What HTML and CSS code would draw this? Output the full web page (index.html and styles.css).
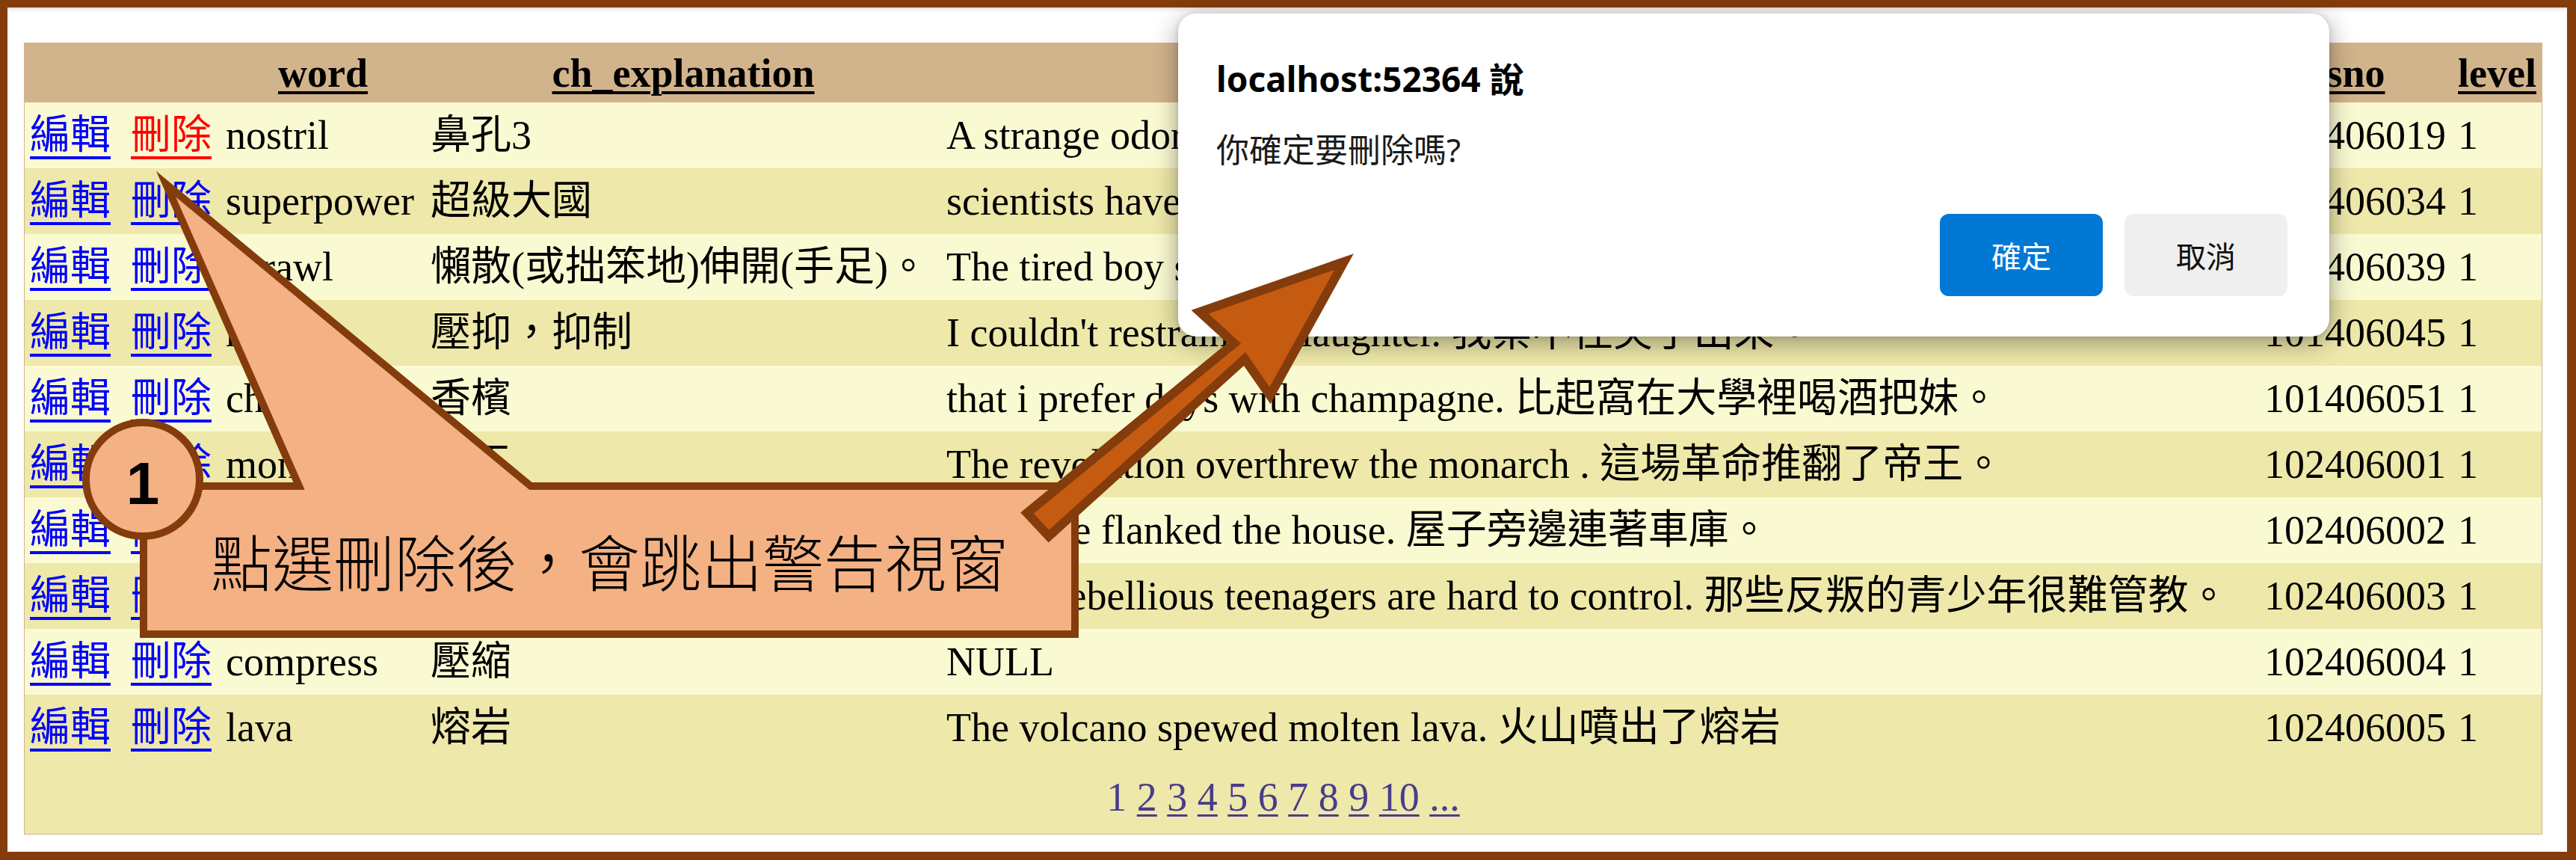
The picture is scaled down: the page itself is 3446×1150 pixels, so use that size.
FILE: index.html
```html
<!DOCTYPE html>
<html lang="zh-Hant">
<head>
<meta charset="utf-8">
<title>GridView 刪除確認</title>
<link rel="stylesheet" href="styles.css">
</head>
<body>
<div class="stage">
  <div class="frame">
    <table class="grid">
      <colgroup>
        <col class="c-cmd"><col class="c-word"><col class="c-ch"><col class="c-en"><col class="c-sno"><col class="c-lv">
      </colgroup>
      <thead>
        <tr>
          <th></th>
          <th><a class="sort" href="#">word</a></th>
          <th><a class="sort" href="#">ch_explanation</a></th>
          <th><a class="sort" href="#">en_explanation</a></th>
          <th><a class="sort" href="#">sno</a></th>
          <th><a class="sort" href="#">level</a></th>
        </tr>
      </thead>
      <tbody>
        <tr>
          <td><a class="lnk" href="#">編輯</a><a class="lnk del hot" href="#">刪除</a></td>
          <td>nostril</td><td>鼻孔3</td><td>A strange odor filled my nostrils. 一股怪味充滿了我的鼻孔。</td><td>101406019</td><td>1</td>
        </tr>
        <tr class="alt">
          <td><a class="lnk" href="#">編輯</a><a class="lnk del" href="#">刪除</a></td>
          <td>superpower</td><td>超級大國</td><td>scientists have said that it is a superpower. 科學家說它是超級大國。</td><td>101406034</td><td>1</td>
        </tr>
        <tr>
          <td><a class="lnk" href="#">編輯</a><a class="lnk del" href="#">刪除</a></td>
          <td>sprawl</td><td>懶散(或拙笨地)伸開(手足)。</td><td>The tired boy sprawled on the sofa. 疲倦的男孩懶散地躺在沙發上。</td><td>101406039</td><td>1</td>
        </tr>
        <tr class="alt">
          <td><a class="lnk" href="#">編輯</a><a class="lnk del" href="#">刪除</a></td>
          <td>restrain</td><td>壓抑，抑制</td><td>I couldn't restrain my laughter. 我禁不住笑了出來。</td><td>101406045</td><td>1</td>
        </tr>
        <tr>
          <td><a class="lnk" href="#">編輯</a><a class="lnk del" href="#">刪除</a></td>
          <td>champagne</td><td>香檳</td><td>that i prefer days with champagne. 比起窩在大學裡喝酒把妹。</td><td>101406051</td><td>1</td>
        </tr>
        <tr class="alt">
          <td><a class="lnk" href="#">編輯</a><a class="lnk del" href="#">刪除</a></td>
          <td>monarch</td><td>帝王</td><td>The revolution overthrew the monarch . 這場革命推翻了帝王。</td><td>102406001</td><td>1</td>
        </tr>
        <tr>
          <td><a class="lnk" href="#">編輯</a><a class="lnk del" href="#">刪除</a></td>
          <td>garage</td><td>車庫</td><td>A garage flanked the house. 屋子旁邊連著車庫。</td><td>102406002</td><td>1</td>
        </tr>
        <tr class="alt">
          <td><a class="lnk" href="#">編輯</a><a class="lnk del" href="#">刪除</a></td>
          <td>rebellious</td><td>反叛的</td><td>Those rebellious teenagers are hard to control. 那些反叛的青少年很難管教。</td><td>102406003</td><td>1</td>
        </tr>
        <tr>
          <td><a class="lnk" href="#">編輯</a><a class="lnk del" href="#">刪除</a></td>
          <td>compress</td><td>壓縮</td><td>NULL</td><td>102406004</td><td>1</td>
        </tr>
        <tr class="alt">
          <td><a class="lnk" href="#">編輯</a><a class="lnk del" href="#">刪除</a></td>
          <td>lava</td><td>熔岩</td><td>The volcano spewed molten lava. 火山噴出了熔岩</td><td>102406005</td><td>1</td>
        </tr>
        <tr class="pager">
          <td colspan="6"><span>1</span> <a href="#">2</a> <a href="#">3</a> <a href="#">4</a> <a href="#">5</a> <a href="#">6</a> <a href="#">7</a> <a href="#">8</a> <a href="#">9</a> <a href="#">10</a> <a href="#">...</a></td>
        </tr>
      </tbody>
    </table>
  </div>

  <div class="dialog">
    <div class="dlg-title">localhost:52364 說</div>
    <div class="dlg-msg">你確定要刪除嗎?</div>
    <div class="dlg-actions">
      <button class="btn ok" type="button">確定</button>
      <button class="btn cancel" type="button">取消</button>
    </div>
  </div>

  <svg class="annot" width="3446" height="1150" viewBox="0 0 3446 1150" xmlns="http://www.w3.org/2000/svg">
    <path class="callout-shape" d="M192,650 L400,650 L222,246 L710,650 L1438,650 L1438,848 L192,848 Z"/>
    <path class="arrow-shape" d="M1374,686 L1651,459 L1605,417 L1798,350 L1699,529 L1665,480 L1403,717 Z"/>
  </svg>
  <div class="note">點選刪除後，會跳出警告視窗</div>
  <div class="badge">1</div>
</div>
</body>
</html>
```

FILE: styles.css
```css
html, body {
  margin: 0;
  padding: 0;
  background: #fff;
}

.stage {
  position: relative;
  width: 3446px;
  height: 1150px;
  overflow: hidden;
}

.frame {
  box-sizing: border-box;
  width: 3446px;
  height: 1150px;
  border-style: solid;
  border-color: #843C0C;
  border-width: 10px 12px 11px 10px;
  padding: 47px 0 0 22px;
  background: linear-gradient(#e4e4e4, #f6f6f6 4px, #ffffff 7px) top left / 100% 8px no-repeat, #ffffff;
  font-family: "Liberation Serif", "Noto Sans CJK TC", serif;
  font-size: 54px;
  color: #000;
}

/* ---------- GridView ---------- */
.grid {
  border-collapse: separate;
  border-spacing: 0;
  border: 1px solid #D2B48C;
  table-layout: fixed;
  width: 3369px;
  background: #FAFAD2;
}

.c-cmd  { width: 262px; }
.c-word { width: 274px; }
.c-ch   { width: 690px; }
.c-en   { width: 1763px; }
.c-sno  { width: 259px; }
.c-lv   { width: 119px; }

.grid th {
  height: 79px;
  padding: 0 7px;
  background: #D2B48C;
  font-weight: bold;
  text-align: center;
  vertical-align: middle;
  white-space: nowrap;
  line-height: 62px;
}

.grid td {
  height: 88px;
  padding: 0 7px;
  text-align: left;
  vertical-align: middle;
  white-space: nowrap;
  line-height: 62px;
}

.grid tr.alt td {
  background: #EEE8AA;
}

.sort {
  color: #000;
  text-decoration: underline;
  text-decoration-thickness: 4px;
  text-underline-offset: 6px;
}

.lnk {
  color: #0000FF;
  text-decoration: underline;
  text-decoration-thickness: 4px;
  text-underline-offset: 10px;
}

.lnk.del {
  margin-left: 27px;
}

.lnk.hot {
  color: #FF0000;
}

.grid tr.pager td {
  height: 98px;
  padding: 0;
  text-align: center;
  background: #EEE8AA;
  color: #483D8B;
}

.pager a {
  color: #483D8B;
  text-decoration: underline;
  text-decoration-thickness: 3px;
  text-underline-offset: 5px;
}

/* ---------- Browser confirm dialog ---------- */
.dialog {
  position: absolute;
  left: 1576px;
  top: 18px;
  width: 1540px;
  height: 432px;
  box-sizing: border-box;
  padding: 60px 56px 54px 51px;
  display: flex;
  flex-direction: column;
  background: #fff;
  border-radius: 24px;
  box-shadow: 0 8px 34px rgba(0, 0, 0, 0.38), 0 0 6px rgba(0, 0, 0, 0.12);
  font-family: "Noto Sans", "Noto Sans CJK TC", sans-serif;
  color: #000;
}

.dlg-title {
  font-size: 46px;
  font-weight: bold;
  line-height: 55px;
}

.dlg-msg {
  margin-top: 40px;
  font-size: 44px;
  line-height: 54px;
  color: #1a1a1a;
}

.dlg-actions {
  margin-top: auto;
  display: flex;
  justify-content: flex-end;
  gap: 29px;
}

.btn {
  width: 218px;
  height: 110px;
  border: none;
  border-radius: 12px;
  font-family: "Noto Sans CJK TC", sans-serif;
  font-size: 40px;
  display: flex;
  align-items: center;
  justify-content: center;
  padding: 0;
}

.btn.ok {
  background: #0078D4;
  color: #fff;
}

.btn.cancel {
  background: #EFEFEF;
  color: #111;
}

/* ---------- Annotation overlay ---------- */
.annot {
  position: absolute;
  left: 0;
  top: 0;
  pointer-events: none;
}

.callout-shape {
  fill: #F4B183;
  stroke: #843C0C;
  stroke-width: 10;
  stroke-linejoin: miter;
  stroke-miterlimit: 10;
}

.arrow-shape {
  fill: #C55A11;
  stroke: #843C0C;
  stroke-width: 12;
  stroke-linejoin: miter;
  stroke-miterlimit: 10;
}

.note {
  position: absolute;
  left: 192px;
  top: 650px;
  width: 1246px;
  height: 198px;
  display: flex;
  align-items: center;
  justify-content: center;
  font-family: "Noto Sans CJK TC", sans-serif;
  font-weight: 300;
  font-size: 82px;
  line-height: 1;
  color: #000;
}

.badge {
  position: absolute;
  left: 110px;
  top: 560px;
  width: 162px;
  height: 162px;
  box-sizing: border-box;
  padding-top: 12px;
  border: 10px solid #843C0C;
  border-radius: 50%;
  background: #F4B183;
  display: flex;
  align-items: center;
  justify-content: center;
  font-family: "Liberation Sans", Arial, sans-serif;
  font-weight: bold;
  font-size: 80px;
  line-height: 1;
  color: #000;
}
```
